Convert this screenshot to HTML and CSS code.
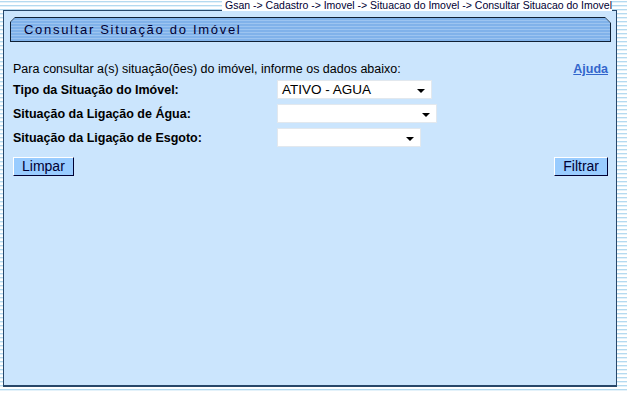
FILE: index.html
```html
<!DOCTYPE html>
<html lang="pt-BR">
<head>
    <meta charset="UTF-8">
    <title>Consultar Situação do Imóvel</title>
    <link rel="stylesheet" href="styles.css">
</head>
<body>
    <div class="breadcrumb">
        <span>Gsan -&gt; Cadastro -&gt; Imovel -&gt; Situacao do Imovel -&gt; Consultar Situacao do Imovel</span>
    </div>

    <div class="panel">
        <div class="title-bar">
            <div class="title-inner">Consultar Situação do Imóvel</div>
        </div>

        <div class="intro">
            <span>Para consultar a(s) situação(ões) do imóvel, informe os dados abaixo:</span>
            <a href="#" class="help">Ajuda</a>
        </div>

        <div class="fields">
            <div class="form-row">
                <label>Tipo da Situação do Imóvel:</label>
                <div class="select sel-tipo">
                    <span>ATIVO - AGUA</span>
                    <i class="arrow"></i>
                </div>
            </div>
            <div class="form-row">
                <label>Situação da Ligação de Água:</label>
                <div class="select sel-agua">
                    <span></span>
                    <i class="arrow"></i>
                </div>
            </div>
            <div class="form-row">
                <label>Situação da Ligação de Esgoto:</label>
                <div class="select sel-esgoto">
                    <span></span>
                    <i class="arrow"></i>
                </div>
            </div>
        </div>

        <div class="buttons">
            <button class="btn">Limpar</button>
            <button class="btn">Filtrar</button>
        </div>
    </div>
</body>
</html>
```

FILE: styles.css
```css
body {
    margin: 0;
    padding: 0;
    font-family: "Liberation Sans", Arial, sans-serif;
    color: #000;
    background-color: #fff;
    background-image: repeating-linear-gradient(to bottom, #fff 0, #fff 1px, #b4daf0 1px, #b4daf0 2px, #e4f2fa 2px, #e4f2fa 3px, #fff 3px, #fff 4px);
    height: 393px;
    overflow: hidden;
}

.breadcrumb {
    height: 10px;
    width: 612px;
    text-align: right;
    font-size: 10.5px;
    line-height: 10px;
    color: #000033;
}

.breadcrumb span {
    background-color: #fff;
    padding-left: 3px;
}

.panel {
    margin-left: 3px;
    width: 614px;
    height: 377px;
    background-color: #cbe5fd;
    border: 1px solid #27476a;
    border-bottom-width: 2px;
    box-sizing: border-box;
    padding: 6px 5px 0 6px;
    font-size: 12.5px;
}

.title-bar {
    height: 25px;
    background-color: #0f2035;
    padding: 1px;
    box-sizing: border-box;
    clip-path: polygon(5px 0, calc(100% - 6px) 0, 100% 6px, 100% 100%, 0 100%, 0 5px);
}

.title-inner {
    height: 23px;
    background-color: #80b2ea;
    background-image: repeating-linear-gradient(to bottom, #80b2ea 0, #80b2ea 2px, #9cc4f0 2px, #9cc4f0 3px);
    clip-path: polygon(4px 0, calc(100% - 5px) 0, 100% 5px, 100% 100%, 0 100%, 0 4px);
    font-size: 13px;
    letter-spacing: 1.7px;
    line-height: 24px;
    padding-left: 13px;
    color: #000033;
}

.intro {
    display: flex;
    justify-content: space-between;
    align-items: center;
    margin-top: 20px;
    padding-left: 3px;
    padding-right: 3px;
    height: 14px;
}

.help {
    color: #3366cc;
    font-weight: bold;
    text-decoration: underline;
}

.fields {
    display: flex;
    flex-direction: column;
    gap: 5px;
    margin-top: 4px;
}

.form-row {
    display: flex;
    align-items: center;
    height: 19px;
    padding-left: 3px;
}

.form-row label {
    width: 264px;
    font-weight: bold;
}

.select {
    height: 19px;
    box-sizing: border-box;
    background-color: #fff;
    border: 1px solid #e2e8ee;
    display: flex;
    align-items: center;
    justify-content: space-between;
    padding: 0 6px 0 4px;
    font-size: 13.5px;
}

.sel-tipo {
    width: 155px;
}

.sel-agua {
    width: 160px;
}

.sel-esgoto {
    width: 144px;
}

.arrow {
    width: 0;
    height: 0;
    border-left: 4px solid transparent;
    border-right: 4px solid transparent;
    border-top: 4px solid #000;
    margin-top: 2px;
}

.buttons {
    display: flex;
    justify-content: space-between;
    margin-top: 10px;
    padding-left: 3px;
    padding-right: 3px;
}

.btn {
    height: 19px;
    padding: 0 8px;
    background-color: #99ccff;
    border: 1px solid;
    border-color: #fff #000033 #000033 #fff;
    font-family: "Liberation Sans", Arial, sans-serif;
    font-size: 14px;
    color: #000033;
    line-height: 17px;
    cursor: pointer;
}
```
